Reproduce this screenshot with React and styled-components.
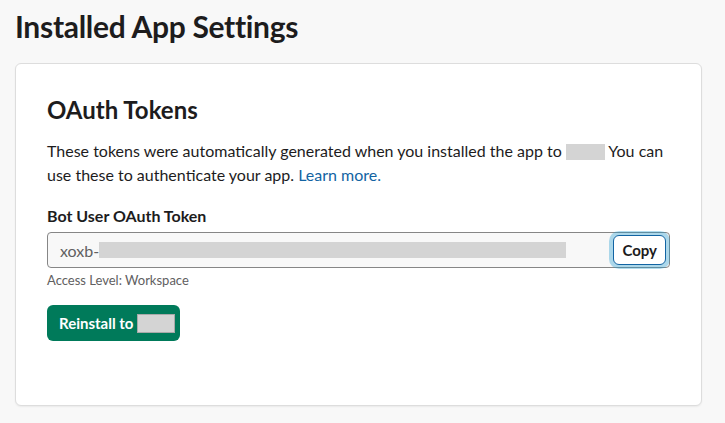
import React from "react";
import styled, { createGlobalStyle } from "styled-components";

const Global = createGlobalStyle`
  html, body { margin: 0; padding: 0; background: #f8f8f8; }
  body { font-family: Lato, "Noto Sans", sans-serif; color: #1d1c1d; }
  * { box-sizing: border-box; }
`;

const Page = styled.div`
  padding: 6px 24px 17px 15px;
  width: 725px;
`;

const Title = styled.h1`
  margin: 0 0 17px;
  font-size: 30px;
  line-height: 40px;
  font-weight: 700;
  letter-spacing: -0.3px;
  color: #1d1c1d;
`;

const Card = styled.section`
  background: #fff;
  border: 1px solid #dddddd;
  border-radius: 6px;
  box-shadow: 0 1px 2px rgba(0, 0, 0, 0.06);
  padding: 30px 31px 64px;
  width: 687px;
`;

const Heading = styled.h2`
  margin: 0 0 13px;
  font-size: 24px;
  line-height: 32px;
  font-weight: 700;
`;

const Text = styled.p`
  margin: 0 0 18px;
  font-size: 16px;
  line-height: 24px;
  color: #1d1c1d;
`;

const Redact = styled.span`
  display: inline-block;
  vertical-align: ${(p) => p.$valign || "-3px"};
  width: ${(p) => p.$w}px;
  height: ${(p) => p.$h}px;
  background: #d4d4d4;
  margin: ${(p) => p.$m || "0"};
  border: ${(p) => (p.$outlined ? "1px solid #a9a9a9" : "none")};
`;

const Link = styled.a`
  color: #1264a3;
  text-decoration: none;
`;

const Label = styled.div`
  font-size: 16px;
  line-height: 22px;
  font-weight: 700;
  margin-bottom: 5px;
`;

const Field = styled.div`
  display: flex;
  align-items: center;
  height: 36px;
  border: 1px solid #868686;
  border-radius: 4px;
  background: #f8f8f8;
  padding: 0 3px 0 12px;
`;

const Value = styled.div`
  flex: 1;
  display: flex;
  align-items: center;
  font-size: 16px;
  color: #616061;
`;

const CopyButton = styled.button`
  font-family: inherit;
  font-size: 15px;
  font-weight: 700;
  color: #1d1c1d;
  background: #fff;
  height: 30px;
  padding: 0 8px;
  border: 1px solid #1264a3;
  border-radius: 6px;
  box-shadow: 0 0 0 4px rgba(29, 155, 209, 0.35);
  cursor: pointer;
`;

const Hint = styled.div`
  font-size: 13px;
  line-height: 18px;
  color: #616061;
  margin-top: 3px;
  margin-bottom: 16px;
`;

const PrimaryButton = styled.button`
  font-family: inherit;
  display: inline-flex;
  align-items: center;
  height: 36px;
  padding: 0 5px 0 12px;
  background: #007a5a;
  color: #fff;
  font-size: 15px;
  font-weight: 700;
  border: none;
  border-radius: 6px;
  cursor: pointer;
`;

export default function App() {
  return (
    <>
      <Global />
      <Page>
        <Title>Installed App Settings</Title>
        <Card>
          <Heading>OAuth Tokens</Heading>
          <Text>
            These tokens were automatically generated when you installed the app to{" "}
            <Redact $w={39} $h={16} /> You can use these to authenticate your app.{" "}
            <Link href="#">Learn more.</Link>
          </Text>
          <Label>Bot User OAuth Token</Label>
          <Field>
            <Value>
              xoxb-
              <Redact $w={467} $h={16} $valign="middle" />
            </Value>
            <CopyButton>Copy</CopyButton>
          </Field>
          <Hint>Access Level: Workspace</Hint>
          <PrimaryButton>
            Reinstall to <Redact $w={38} $h={19} $m="0 0 0 4px" $outlined />
          </PrimaryButton>
        </Card>
      </Page>
    </>
  );
}
